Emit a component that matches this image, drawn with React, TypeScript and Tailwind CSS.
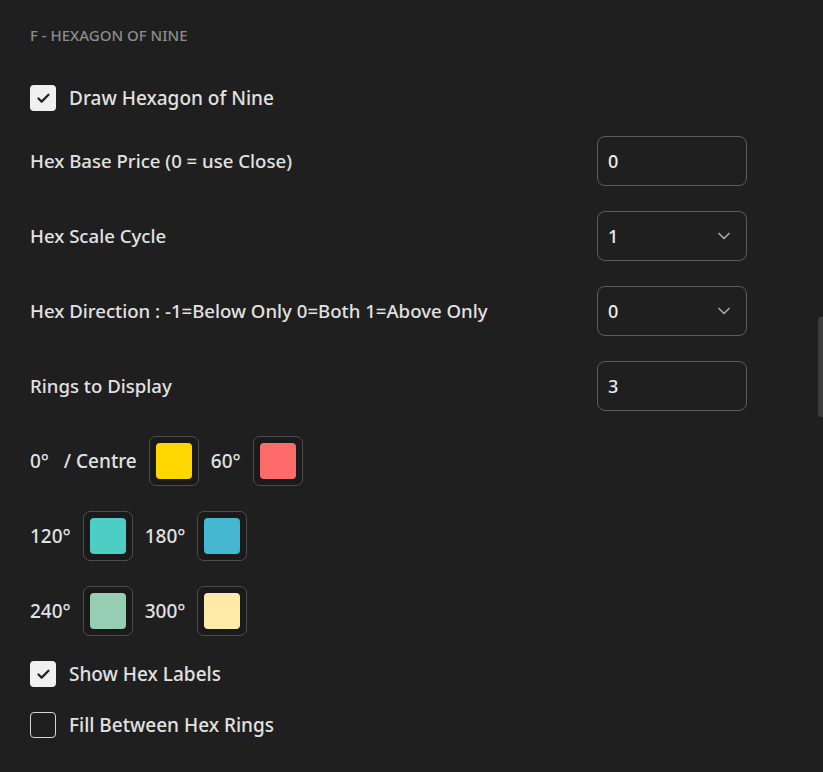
import { ChevronDown, Check } from "lucide-react";

const FONT = { fontFamily: '"Noto Sans", "DejaVu Sans", sans-serif' };

function Checkbox({ checked, label }: { checked: boolean; label: string }) {
  return (
    <label className="flex items-center gap-[13px] h-[26px]">
      <span
        className={`w-[26px] h-[26px] rounded-[4px] flex items-center justify-center ${
          checked ? "bg-[#f0f0f0]" : "border border-[#d8d8d8]"
        }`}
      >
        {checked ? <Check size={15} strokeWidth={3.5} className="text-[#1f1f1f]" /> : null}
      </span>
      <span className="text-[19px] font-medium text-[#e2e2e2]">{label}</span>
    </label>
  );
}

function Field({ label, value, select }: { label: string; value: string; select?: boolean }) {
  return (
    <div className="flex items-center justify-between h-[50px] pr-[46px]">
      <span className="text-[18.6px] font-medium text-[#e2e2e2]">{label}</span>
      <div className="w-[150px] h-[50px] rounded-[8px] border border-[#5c5c5c] flex items-center justify-between pl-[10px] pr-[12px]">
        <span className="text-[18px] font-medium text-[#ececec]">{value}</span>
        {select ? <ChevronDown size={20} strokeWidth={2} className="text-[#a8a8a8]" /> : null}
      </div>
    </div>
  );
}

function Swatch({ color }: { color: string }) {
  return (
    <span className="w-[50px] h-[50px] rounded-[7px] border border-[#4c4c4c] bg-[#1a1a1a] flex items-center justify-center">
      <span className={`w-[36px] h-[36px] rounded-[4px] ${color}`} />
    </span>
  );
}

const SWATCH_ROWS = [
  [
    { label: "0°   / Centre", color: "bg-[#ffd700]" },
    { label: "60°", color: "bg-[#ff6b6b]" },
  ],
  [
    { label: "120°", color: "bg-[#4ecdc4]" },
    { label: "180°", color: "bg-[#45b7d1]" },
  ],
  [
    { label: "240°", color: "bg-[#96ceb4]" },
    { label: "300°", color: "bg-[#ffeaa7]" },
  ],
];

export default function App() {
  return (
    <div className="relative w-[823px] h-[772px] bg-[#1f1f1f] overflow-hidden" style={FONT}>
      <div className="px-[30px] pt-[26px] flex flex-col">
        <div className="text-[15px] font-medium text-[#8c8c8c] h-[18px] leading-[18px]">F - HEXAGON OF NINE</div>

        <div className="mt-[41px]">
          <Checkbox checked label="Draw Hexagon of Nine" />
        </div>

        <div className="mt-[25px] flex flex-col gap-[25px]">
          <Field label="Hex Base Price (0 = use Close)" value="0" />
          <Field label="Hex Scale Cycle" value="1" select />
          <Field label="Hex Direction : -1=Below Only 0=Both 1=Above Only" value="0" select />
          <Field label="Rings to Display" value="3" />
        </div>

        <div className="mt-[25px] flex flex-col gap-[25px]">
          {SWATCH_ROWS.map((row, i) => (
            <div key={i} className="flex items-center gap-[12px] h-[50px]">
              {row.map((s) => (
                <div key={s.label} className="flex items-center gap-[12px]">
                  <span className="text-[19px] font-medium text-[#e2e2e2] whitespace-pre">{s.label}</span>
                  <Swatch color={s.color} />
                </div>
              ))}
            </div>
          ))}
        </div>

        <div className="mt-[25px] flex flex-col gap-[25px]">
          <Checkbox checked label="Show Hex Labels" />
          <Checkbox checked={false} label="Fill Between Hex Rings" />
        </div>
      </div>

      {/* scrollbar thumb */}
      <div className="absolute right-0 top-[317px] w-[5px] h-[100px] rounded-l-[3px] bg-[#3c3c3c]" />
    </div>
  );
}
